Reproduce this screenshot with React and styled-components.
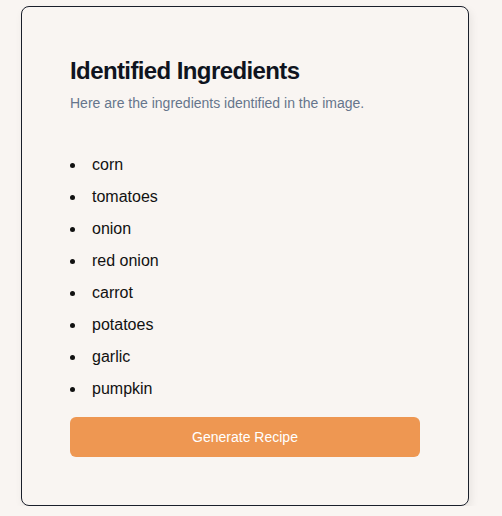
import React from "react";
import styled, { createGlobalStyle } from "styled-components";

const GlobalStyle = createGlobalStyle`
  html, body {
    margin: 0;
    padding: 0;
    background: #f9f5f2;
    font-family: "Liberation Sans", Arial, sans-serif;
  }
`;

const Page = styled.div`
  padding: 6px 0 0 21px;
`;

const Card = styled.section`
  width: 448px;
  box-sizing: border-box;
  padding: 48px;
  border: 1px solid #1a1f2b;
  border-radius: 8px;
  background: #f9f5f2;
  box-shadow: 2px 4px 8px rgba(0, 0, 0, 0.08);
`;

const Title = styled.h2`
  margin: 0;
  font-size: 24px;
  line-height: 32px;
  font-weight: 700;
  letter-spacing: -0.6px;
  color: #0f1420;
`;

const Subtitle = styled.p`
  margin: 6px 0 0;
  font-size: 14px;
  line-height: 20px;
  color: #66758c;
`;

const List = styled.ul`
  margin: 40px 0 16px;
  padding: 0;
  list-style: none;
`;

const Item = styled.li`
  display: flex;
  align-items: center;
  gap: 17px;
  font-size: 16px;
  line-height: 24px;
  color: #111111;
  &::before {
    content: "";
    width: 5px;
    height: 5px;
    margin-top: 1px;
    border-radius: 50%;
    background: #111111;
  }
  & + & {
    margin-top: 8px;
  }
`;

const Button = styled.button`
  display: block;
  width: 100%;
  height: 40px;
  border: none;
  border-radius: 6px;
  background: #ee9752;
  color: #ffffff;
  font-family: inherit;
  font-size: 14px;
  cursor: pointer;
`;

const ingredients = [
  "corn",
  "tomatoes",
  "onion",
  "red onion",
  "carrot",
  "potatoes",
  "garlic",
  "pumpkin",
];

const App = () => {
  return (
    <Page>
      <GlobalStyle />
      <Card>
        <Title>Identified Ingredients</Title>
        <Subtitle>Here are the ingredients identified in the image.</Subtitle>
        <List>
          {ingredients.map((item) => (
            <Item key={item}>{item}</Item>
          ))}
        </List>
        <Button>Generate Recipe</Button>
      </Card>
    </Page>
  );
};

export default App;
